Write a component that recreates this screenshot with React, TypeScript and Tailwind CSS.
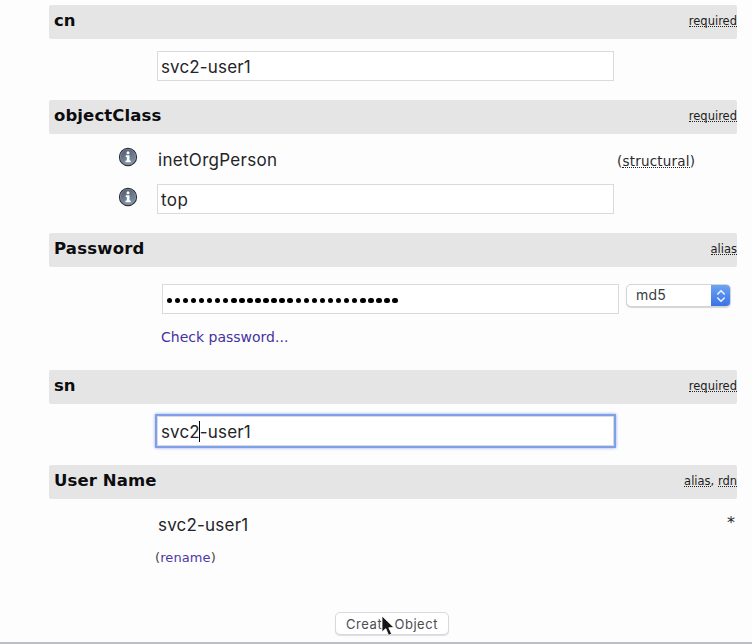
import type { ReactNode } from "react";

function Hint({ children }: { children: ReactNode }) {
  return <span className="border-b border-dotted border-[#222] leading-[10px]">{children}</span>;
}

function Bar({ title, titleClass, children }: { title: string; titleClass: string; children: ReactNode }) {
  return (
    <header className="flex h-[34px] w-[688px] shrink-0 items-start justify-between rounded-[2px] bg-[#e5e5e6] pl-[5px] pt-[6px]">
      <h2 className={`text-[16.5px] font-bold leading-[20px] text-[#0c0c0e] ${titleClass}`}>{title}</h2>
      <div className="flex pt-[5px] text-[11.5px] leading-[10px] tracking-[0px] text-[#1d1d20]">{children}</div>
    </header>
  );
}

function Field({ children }: { children?: ReactNode }) {
  return (
    <div className="flex h-[30px] w-[457px] items-center border border-[#d9d9df] bg-white pl-[3px] pt-[2px] font-['Inter','Liberation_Sans',sans-serif] text-[17px] leading-[22px] tracking-[0.15px] text-[#242427]">
      {children}
    </div>
  );
}

function Info() {
  return (
    <svg viewBox="0 0 20 20" className="h-5 w-5 shrink-0">
      <defs>
        <linearGradient id="disc" x1="0" y1="0" x2="0.4" y2="1">
          <stop offset="0" stopColor="#4b5264" />
          <stop offset="1" stopColor="#8093a6" />
        </linearGradient>
      </defs>
      <circle cx="10" cy="10" r="8.6" fill="url(#disc)" stroke="#2d3039" strokeWidth="1.1" />
      <circle cx="10" cy="10" r="7.6" fill="none" stroke="#9098a6" strokeWidth="0.6" />
      <circle cx="10" cy="5.7" r="1.5" fill="#fff" />
      <path d="M7.7 8.2h3.8v5.4h1.2v1.7H7.5v-1.7h1.3V9.9H7.7z" fill="#fff" />
    </svg>
  );
}

export default function App() {
  return (
    <main className="flex h-[644px] w-[752px] flex-col overflow-hidden border-b-2 border-[#bdbdc4] bg-[#fdfdfe] pl-[49px] pt-[5px] font-['DejaVu_Sans',Verdana,sans-serif]">
      <section className="flex h-[95px] shrink-0 flex-col">
        <Bar title="cn" titleClass="tracking-[0px]"><Hint>required</Hint></Bar>
        <div className="pl-[108px] pt-[12px]"><Field>svc2-user1</Field></div>
      </section>

      <section className="flex h-[133px] shrink-0 flex-col">
        <Bar title="objectClass" titleClass="tracking-[0.1px]"><Hint>required</Hint></Bar>
        <div className="flex h-[49px] items-start pl-[69px] pt-[13px]">
          <Info />
          <span className="ml-[20px] w-[459px] pt-[2px] font-['Inter','Liberation_Sans',sans-serif] text-[17px] leading-[22px] tracking-[0.3px] text-[#242427]">inetOrgPerson</span>
          <span className="flex pt-[8px] text-[13.5px] leading-[12px] tracking-[0.2px] text-[#2b2b2e]">(<span className="border-b border-dotted border-[#222]">structural</span>)</span>
        </div>
        <div className="flex items-start pl-[69px]">
          <div className="pt-[4px]"><Info /></div>
          <div className="ml-[19px] pt-px"><Field><span className="tracking-[0.4px]">top</span></Field></div>
        </div>
      </section>

      <section className="flex h-[137px] shrink-0 flex-col">
        <Bar title="Password" titleClass="tracking-[0.2px]"><Hint>alias</Hint></Bar>
        <div className="flex items-start pl-[113px] pt-[17px]">
          <Field>
            <span className="flex gap-[2.575px] pl-[0.5px] pt-px" aria-label="Password">
              {Array.from({ length: 29 }, (_, i) => <i key={i} className="h-[5.5px] w-[5.5px] rounded-full bg-black" />)}
            </span>
          </Field>
          <div className="ml-[7px] flex h-[23px] w-[105px] overflow-hidden rounded-[5px] border border-[#d3d3d8] bg-white shadow-[0_1px_1px_#d5d5da]">
            <span className="grow pl-[9px] font-['Inter','Liberation_Sans',sans-serif] text-[14px] leading-[20px] tracking-[0.2px] text-[#3c3c3f]">md5</span>
            <span className="flex w-[19px] items-center justify-center bg-gradient-to-b from-[#6da3f2] to-[#3972e7]">
              <svg viewBox="0 0 10 14" className="h-[14px] w-[10px]" fill="none" stroke="#e8f0ff" strokeWidth="1.6" strokeLinecap="round" strokeLinejoin="round"><path d="M1.7 5 5 1.7 8.3 5M1.7 9 5 12.3 8.3 9" /></svg>
            </span>
          </div>
        </div>
        <a className="pl-[112px] pt-[14px] text-[14px] leading-[18px] tracking-[0px] text-[#44339f]">Check password...</a>
      </section>

      <section className="flex h-[95px] shrink-0 flex-col">
        <Bar title="sn" titleClass="tracking-[0px]"><Hint>required</Hint></Bar>
        <div className="pl-[108px] pt-[12px]">
          <div className="w-[457px] shadow-[0_0_0_2px_#7f9fe6,0_0_3px_2px_#8eabeb]">
            <Field>
              <span className="relative">svc2-user1<i className="absolute left-[38px] top-0 h-[21px] w-px bg-black" /></span>
            </Field>
          </div>
        </div>
      </section>

      <section className="flex h-[115px] shrink-0 flex-col">
        <Bar title="User Name" titleClass="tracking-[0.1px]"><Hint>alias</Hint>,&nbsp;<Hint>rdn</Hint></Bar>
        <div className="flex w-[686px] justify-between pl-[109px] pt-[15px]">
          <span className="font-['Inter','Liberation_Sans',sans-serif] text-[17px] leading-[22px] tracking-[0.2px] text-[#242427]">svc2-user1</span>
          <span className="text-[16px] leading-[18px] text-[#29292b]">*</span>
        </div>
        <div className="pl-[106px] pt-[13px] text-[13px] leading-[18px] tracking-[0.1px] text-[#444]">(<a className="text-[#4b39a8]">rename</a>)</div>
      </section>

      <footer className="pl-[286px] pt-[32px]">
        <button className="relative flex h-[23px] w-[114px] items-center justify-center rounded-[5px] border border-[#d9d9de] bg-white font-['Inter','Liberation_Sans',sans-serif] text-[13px] leading-[18px] tracking-[0.55px] text-[#4d4d50] shadow-[0_1px_1px_#dddde2]">
          Create Object
          <svg viewBox="0 0 14 22" className="absolute left-[45px] top-[2px] h-[22px] w-[14px]"><path d="M1 1v16l3.8-3.4 2.8 6.7 3-1.3-2.8-6.3 5.1-.2z" fill="#151518" stroke="#fff" strokeWidth="0.8" /></svg>
        </button>
      </footer>
    </main>
  );
}
